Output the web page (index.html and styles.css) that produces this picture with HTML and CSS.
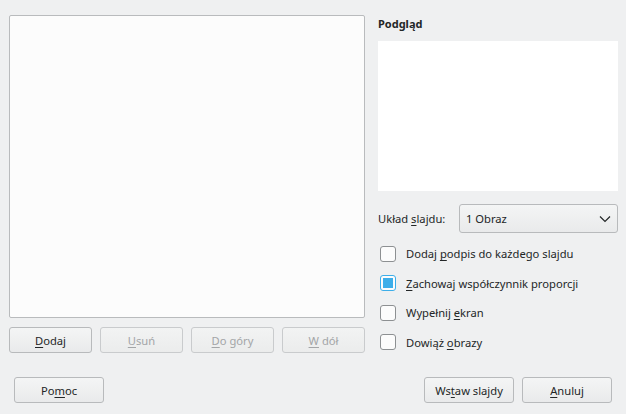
FILE: index.html
```html
<!DOCTYPE html>
<html lang="pl">
  <head>
    <meta charset="UTF-8" />
    <title>Wstaw slajdy</title>
    <link rel="stylesheet" href="styles.css">
  </head>
  <body>
    <div class="dialog">
      <div class="main">
        <section class="left">
          <div class="list"></div>
          <div class="list-buttons">
            <button class="btn"><u>D</u>odaj</button>
            <button class="btn" disabled><u>U</u>suń</button>
            <button class="btn" disabled><u>D</u>o góry</button>
            <button class="btn" disabled><u>W</u> dół</button>
          </div>
        </section>
        <section class="right">
          <h3 class="title">Podgląd</h3>
          <div class="preview"></div>
          <div class="layout-row">
            <span class="label">Układ <u>s</u>lajdu:</span>
            <div class="combo">
              <span>1 Obraz</span>
              <svg width="12" height="8" viewBox="0 0 12 8"><path d="M1 1.5 L6 6.5 L11 1.5" fill="none" stroke="#232627" stroke-width="1.2"/></svg>
            </div>
          </div>
          <label class="check"><span class="box"></span><span>Dodaj <u>p</u>odpis do każdego slajdu</span></label>
          <label class="check"><span class="box checked"></span><span><u>Z</u>achowaj współczynnik proporcji</span></label>
          <label class="check"><span class="box"></span><span>Wypełnij <u>e</u>kran</span></label>
          <label class="check"><span class="box"></span><span>Dowiąż <u>o</u>brazy</span></label>
        </section>
      </div>
      <div class="footer">
        <button class="btn help">Po<u>m</u>oc</button>
        <div class="spacer"></div>
        <button class="btn wide">Ws<u>t</u>aw slajdy</button>
        <button class="btn wide"><u>A</u>nuluj</button>
      </div>
    </div>
  </body>
</html>
```
FILE: styles.css
```css
body {
  margin: 0;
  background: #eff0f1;
  font-family: "Noto Sans", sans-serif;
  font-size: 11.2px;
  color: #232627;
}

u {
  text-decoration-thickness: 1px;
  text-underline-offset: 2px;
}

.dialog {
  padding: 15px 0 0 9px;
  width: 609px;
}

.main {
  display: flex;
  gap: 13px;
}

.left {
  width: 356px;
}

.list {
  height: 301px;
  background: #fcfcfc;
  border: 1px solid #b9bbbd;
  border-radius: 2px;
}

.list-buttons {
  display: flex;
  gap: 8px;
  margin-top: 9px;
}

.btn {
  width: 83px;
  height: 26px;
  padding: 0;
  font-family: inherit;
  font-size: 11.2px;
  color: #232627;
  background: linear-gradient(#f4f5f5, #e9eaeb);
  border: 1px solid #b8babc;
  border-radius: 3px;
}

.btn:disabled {
  color: #a3a5a7;
  border-color: #c9cbcd;
  background: linear-gradient(#f2f3f3, #ebecec);
}

.right {
  width: 240px;
}

.title {
  margin: 2px 0 0;
  height: 24px;
  font-size: 11px;
  font-weight: bold;
  line-height: 14px;
}

.preview {
  height: 150px;
  background: #ffffff;
}

.layout-row {
  display: flex;
  align-items: center;
  height: 29px;
  margin: 13px 0 6px;
}

.label {
  width: 81px;
}

.combo {
  flex: 1;
  height: 27px;
  display: flex;
  align-items: center;
  justify-content: space-between;
  padding: 0 6px;
  background: linear-gradient(#f4f5f5, #e9eaeb);
  border: 1px solid #b8babc;
  border-radius: 3px;
}

.check {
  display: flex;
  align-items: center;
  height: 29.5px;
  padding-left: 2px;
}

.box {
  width: 14px;
  height: 14px;
  margin-right: 10px;
  border: 1px solid #8d9092;
  border-radius: 3px;
  background: #fcfcfc;
  display: flex;
  align-items: center;
  justify-content: center;
}

.box.checked {
  border-color: #3daee9;
}

.box.checked::after {
  content: "";
  width: 10px;
  height: 10px;
  background: #3daee9;
}

.footer {
  display: flex;
  gap: 8px;
  margin-top: 20px;
}

.help {
  width: 90px;
  margin-left: 5px;
}

.spacer {
  flex: 1;
}

.wide {
  width: 90px;
}

.footer .wide:last-child {
  margin-right: 6px;
}
```
